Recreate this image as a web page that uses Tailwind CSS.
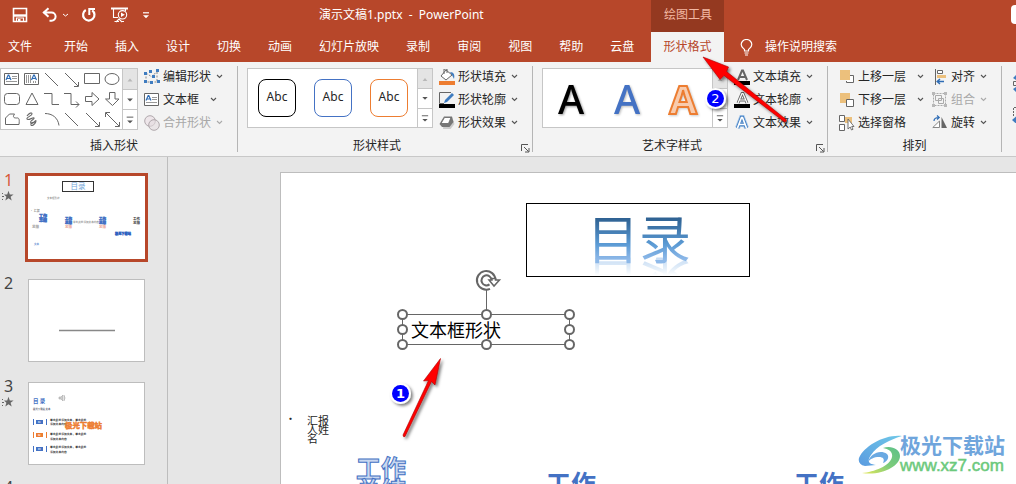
<!DOCTYPE html>
<html lang="zh-CN">
<head>
<meta charset="utf-8">
<title>演示文稿1.pptx - PowerPoint</title>
<script src="https://cdn.jsdelivr.net/npm/@tailwindcss/browser@4"></script>
</head>
<body class="relative flex h-screen flex-col overflow-hidden bg-[#e6e6e6] font-['Noto_Sans','Noto_Sans_CJK_SC',sans-serif] text-xs text-[#262626]">

<svg class="hidden">
  <symbol id="chev" viewBox="0 0 7 5"><path d="M1 1l2.5 2.5L6 1" fill="none" stroke="#555" stroke-width="1.1"/></symbol>
  <symbol id="chevoff" viewBox="0 0 7 5"><path d="M1 1l2.5 2.5L6 1" fill="none" stroke="#aaa" stroke-width="1.1"/></symbol>
  <symbol id="up" viewBox="0 0 14 20"><path d="M4.500 12.500h5L7 9.500z" fill="#b8b8b8"/></symbol>
  <symbol id="down" viewBox="0 0 14 20"><path d="M4 9h6l-3 3z" fill="#555"/></symbol>
  <symbol id="more" viewBox="0 0 14 20"><path d="M3.500 7.500h7" stroke="#555"/><path d="M4 11h6l-3 3z" fill="#555"/></symbol>
  <symbol id="launch" viewBox="0 0 9 9"><path d="M.5 7V.5H7M3 3l4.500 4.500M8 4v4H4" fill="none" stroke="#555"/></symbol>
  <symbol id="star" viewBox="0 0 12 12"><path d="M6.500.8l1.300 3.600 3.800.1-3 2.300 1.100 3.700-3.200-2.200-3.200 2.200 1.100-3.700L2 4.500l3.200-.1z" fill="#666"/><path d="M0 3.500h1M0 6.500h2M0 9.500h1" stroke="#666"/></symbol>
</svg>

<header class="bg-[#b7472a] text-white">
  <div class="flex h-8">
    <div class="flex flex-1 items-center pb-[2px] pl-3">
      <button aria-label="保存" class="mr-[14px]"><svg class="size-4" viewBox="0 0 16 16"><path d="M1.500 1.500h13v13h-13z" fill="none" stroke="#fff" stroke-width="1.600"/><path d="M2 8.500h12" stroke="#fff" stroke-width="2.400"/><path d="M4.500 15v-4h7v4" fill="none" stroke="#fff" stroke-width="1.200"/><path d="M6 12h2.500v3H6z" fill="#fff"/></svg></button>
      <button aria-label="撤消"><svg class="size-4" viewBox="0 0 16 16"><path d="M1 5.500h8.500a4 4 0 010 8.200H7.500M6.500 1.200L1.800 5.500l4.700 4.300" fill="none" stroke="#fff" stroke-width="2"/></svg></button>
      <button aria-label="撤消选项" class="ml-1 mr-3"><svg class="h-[5px] w-[7px]" viewBox="0 0 7 5"><path d="M1 1l2.500 2L6 1" fill="none" stroke="#fff"/></svg></button>
      <button aria-label="重复" class="mr-[14px]"><svg class="size-4" viewBox="0 0 16 16"><path d="M4.800 3A5.700 5.700 0 1 0 11.200 3.300" fill="none" stroke="#fff" stroke-width="2.200"/><path d="M8.300 8V2H14" fill="none" stroke="#fff" stroke-width="2"/></svg></button>
      <button aria-label="从头开始放映" class="mr-[15px]"><svg class="h-4 w-[17px]" viewBox="0 0 17 16"><path d="M0 1.500h17" stroke="#fff" stroke-width="2"/><path d="M2.500 2v8.500H7M14.500 2v2M5 15l3-3 3 3M3.500 14.500H8M11 14.500h2" fill="none" stroke="#fff" stroke-width="1.100"/><circle cx="11.500" cy="7.800" r="4.200" fill="#b7472a" stroke="#fff" stroke-width="1.100"/><path d="M10 5.500v4.600l3.800-2.300z" fill="#fff"/></svg></button>
      <button aria-label="自定义快速访问工具栏"><svg class="h-[7px] w-[6px]" viewBox="0 0 6 7"><path d="M0 .8h6" stroke="#fff" stroke-width="1.200"/><path d="M0 3.200h6l-3 3z" fill="#fff"/></svg></button>
      <h1 class="ml-[170px] whitespace-pre">演示文稿1.pptx  -  PowerPoint</h1>
    </div>
    <div class="flex w-[73px] items-center bg-[#943920] pb-[2px] pl-[13px] text-[#f3b8a3]">绘图工具</div>
    <div class="flex w-[292px] items-center justify-end pb-1"><span class="h-[19px] w-[5px] rounded-l-sm bg-white"></span></div>
  </div>
  <nav class="flex h-[30px] items-center">
    <div class="flex flex-1 items-center gap-[27px] pl-2">
      <a href="#" class="mr-[5px]">文件</a><a href="#">开始</a><a href="#">插入</a><a href="#">设计</a><a href="#">切换</a><a href="#">动画</a><a href="#">幻灯片放映</a><a href="#">录制</a><a href="#">审阅</a><a href="#">视图</a><a href="#">帮助</a><a href="#">云盘</a>
    </div>
    <a href="#" class="flex h-full w-[73px] items-center justify-center bg-[#f3f3f3] text-[#b7472a]">形状格式</a>
    <button class="flex w-[292px] items-center gap-3 pl-4"><svg class="h-[17px] w-[13px]" viewBox="0 0 13 17"><path d="M4.500 12V10.500C3 9 1.200 8 1.200 5.500a5.300 5 0 0110.600 0C11.800 8 10 9 8.500 10.500V12zM4.500 14h4M5 16h3" fill="none" stroke="#fff" stroke-width="1.200"/></svg>操作说明搜索</button>
  </nav>
</header>

<section class="flex h-[95px] shrink-0 border-b border-[#c8c8c8] bg-[#f3f3f3]" aria-label="形状格式">
  <!-- 插入形状 -->
  <div class="my-1 flex w-[238px] shrink-0 flex-col border-r border-[#b5b5b5]">
    <div class="mt-[2px] flex">
      <div class="flex h-[62px] w-[138px] border border-[#c6c6c6] bg-white">
        <div class="grid flex-1 grid-cols-6">
          <button aria-label="文本框"><svg class="size-5" viewBox="0 0 20 20"><path d="M3.500 4.500h14v11h-14z" fill="none" stroke="#666"/><path d="M5 11l2.200-5h.6L10 11M6 9.500h3" fill="none" stroke="#2e6cb5" stroke-width="1.200"/><path d="M11 7.500h5M11 9.500h5M5 12.500h11" stroke="#999"/></svg></button>
          <button aria-label="竖排文本框"><svg class="size-5" viewBox="0 0 20 20"><path d="M3.500 4.500h14v11h-14z" fill="none" stroke="#666"/><path d="M10.500 11l2.200-5h.6l2.200 5M11.500 9.500h3" fill="none" stroke="#2e6cb5" stroke-width="1.200"/><path d="M5.500 6v8M7.500 6v8M9.500 6v8M12.500 12v2M14.500 12v2" stroke="#999"/></svg></button>
          <button aria-label="直线"><svg class="size-5" viewBox="0 0 20 20"><path d="M4 4l13 13" stroke="#666"/></svg></button>
          <button aria-label="箭头"><svg class="size-5" viewBox="0 0 20 20"><path d="M4 4l13 13M17.500 13v4.500H13" fill="none" stroke="#666"/></svg></button>
          <button aria-label="矩形"><svg class="size-5" viewBox="0 0 20 20"><path d="M2.500 4.500h15v10h-15z" fill="none" stroke="#666"/></svg></button>
          <button aria-label="椭圆"><svg class="size-5" viewBox="0 0 20 20"><ellipse cx="10" cy="10" rx="7" ry="5.500" fill="none" stroke="#666"/></svg></button>
          <button aria-label="圆角矩形"><svg class="size-5" viewBox="0 0 20 20"><rect x="3.500" y="4.500" width="15" height="11" rx="3" fill="none" stroke="#666"/></svg></button>
          <button aria-label="三角形"><svg class="size-5" viewBox="0 0 20 20"><path d="M11 4L17 15.500H5z" fill="none" stroke="#666"/></svg></button>
          <button aria-label="肘形连接符"><svg class="size-5" viewBox="0 0 20 20"><path d="M3 4.500h8v11h7" fill="none" stroke="#666"/></svg></button>
          <button aria-label="肘形箭头连接符"><svg class="size-5" viewBox="0 0 20 20"><path d="M3 4.500h7v11h8M15 12.500l3 3-3 3" fill="none" stroke="#666"/></svg></button>
          <button aria-label="右箭头"><svg class="size-5" viewBox="0 0 20 20"><path d="M3.500 7.500H10v-4l7 6.500-7 6.500v-4H3.500z" fill="none" stroke="#666"/></svg></button>
          <button aria-label="下箭头"><svg class="size-5" viewBox="0 0 20 20"><path d="M7.500 3.500v6.500h-4l7 6.500 6.500-6.500h-4V3.500z" fill="none" stroke="#666"/></svg></button>
          <button aria-label="任意多边形"><svg class="size-5" viewBox="0 0 20 20"><path d="M4.500 15.500V9l4-4h5c-2 3-1 4 2 4 3-.5 3 2 2.500 6.500z" fill="none" stroke="#666"/></svg></button>
          <button aria-label="自由曲线"><svg class="size-5" viewBox="0 0 20 20"><path d="M6 7c2-3 5-4 5-2s-6 3-5 5 6-2 7-1-5 3-3 5 5-4 5-2-4 6-5 4 2-3 4-3" fill="none" stroke="#666" stroke-width="1.100"/></svg></button>
          <button aria-label="弧形"><svg class="size-5" viewBox="0 0 20 20"><path d="M4 4.500c7 0 13 4 14 12" fill="none" stroke="#666"/></svg></button>
          <button aria-label="直线"><svg class="size-5" viewBox="0 0 20 20"><path d="M4 4l13 13" stroke="#666"/></svg></button>
          <button aria-label="箭头"><svg class="size-5" viewBox="0 0 20 20"><path d="M4 4l13 13M17.500 13v4.500H13" fill="none" stroke="#666"/></svg></button>
          <button aria-label="双箭头"><svg class="size-5" viewBox="0 0 20 20"><path d="M4 4l13 13M17.500 13v4.500H13M3.500 8V3.500H8" fill="none" stroke="#666"/></svg></button>
        </div>
        <div class="flex w-[15px] flex-col divide-y divide-[#c6c6c6] border-l border-[#c6c6c6]">
          <button aria-label="上一行" class="flex-1 bg-[#e4e4e4]"><svg class="h-5 w-[14px]"><use href="#up"/></svg></button>
          <button aria-label="下一行" class="flex-1"><svg class="h-[19px] w-[14px]"><use href="#down"/></svg></button>
          <button aria-label="其他形状" class="flex-1"><svg class="h-[19px] w-[14px]"><use href="#more"/></svg></button>
        </div>
      </div>
      <div class="-mt-[3px] ml-[6px] flex flex-col">
        <button class="flex h-[23px] items-center gap-[3px]"><svg class="size-4" viewBox="0 0 16 16"><path d="M2 4l6 4 5-6M2 4v9h11V2" fill="none" stroke="#888" stroke-dasharray="2 1.500"/><path d="M0 3h3v3H0zM5 1h3v3H5zM12 0h3v3h-3zM8 6h3v3H8zM0 11h3v3H0zM6 12h3v3H6zM13 11h3v3h-3z" fill="#3f7cc0"/></svg>编辑形状<svg class="ml-[2px] h-[5px] w-[7px]"><use href="#chev"/></svg></button>
        <button class="flex h-[23px] items-center gap-[3px]"><svg class="size-4" viewBox="0 0 16 16"><path d="M.5 1.500h14v12H.5z" fill="#fff" stroke="#666"/><path d="M2 8.500l2.200-5h.6L7 8.500M3 7h3" fill="none" stroke="#2e6cb5" stroke-width="1.200"/><path d="M8 5.500h5M8 7.500h5M2 10.500h11" stroke="#999"/></svg>文本框<svg class="ml-2 h-[5px] w-[7px]"><use href="#chev"/></svg></button>
        <button disabled class="flex h-[23px] items-center gap-[3px] text-[#a8a8a8]"><svg class="size-4" viewBox="0 0 16 16"><circle cx="6" cy="6" r="5.300" fill="#eee6ea" stroke="#b0a8ac"/><circle cx="10" cy="10" r="5.300" fill="#e4dce0" fill-opacity=".6" stroke="#b0a8ac"/></svg>合并形状<svg class="ml-[2px] h-[5px] w-[7px]"><use href="#chevoff"/></svg></button>
      </div>
    </div>
    <div class="mt-[2px] pr-[9px] text-center leading-[20px]">插入形状</div>
  </div>

  <!-- 形状样式 -->
  <div class="my-1 flex w-[295px] shrink-0 flex-col border-r border-[#b5b5b5]">
    <div class="mt-[2px] flex pl-[9px]">
      <div class="flex h-[60px] w-[186px] border border-[#c6c6c6] bg-white">
        <div class="flex flex-1 gap-[18px] pl-[10px] pt-[10px]">
          <button class="size-[38px] rounded-lg border border-black pb-[2px]">Abc</button>
          <button class="size-[38px] rounded-lg border border-[#4472c4] pb-[2px]">Abc</button>
          <button class="size-[38px] rounded-lg border border-[#ed7d31] pb-[2px]">Abc</button>
        </div>
        <div class="flex w-[15px] flex-col divide-y divide-[#c6c6c6] border-l border-[#c6c6c6]">
          <button aria-label="上一行" class="flex-1 bg-[#e4e4e4]"><svg class="h-[19px] w-[14px]"><use href="#up"/></svg></button>
          <button aria-label="下一行" class="flex-1"><svg class="h-[18px] w-[14px]"><use href="#down"/></svg></button>
          <button aria-label="其他样式" class="flex-1"><svg class="h-[18px] w-[14px]"><use href="#more"/></svg></button>
        </div>
      </div>
      <div class="-mt-[3px] ml-[6px] flex flex-col">
        <button class="flex h-[23px] items-center gap-[3px]"><svg class="size-4" viewBox="0 0 16 16"><path d="M7 1l6 5-6 5-5-4z" fill="#fff" stroke="#666"/><path d="M5 5V0h3v4" fill="none" stroke="#666"/><path d="M11 3c4 0 5 3 4 7l-2-4z" fill="#3f7cc0"/><path d="M0 12h16v4H0z" fill="#ed7d31"/></svg>形状填充<svg class="ml-[2px] h-[5px] w-[7px]"><use href="#chev"/></svg></button>
        <button class="flex h-[23px] items-center gap-[3px]"><svg class="size-4" viewBox="0 0 16 16"><path d="M12 .5H.5v11H5" fill="none" stroke="#666"/><path d="M5 11l1-3 7-7 2 2-7 7z" fill="#3f7cc0"/><path d="M0 12h16v4H0z"/></svg>形状轮廓<svg class="ml-[2px] h-[5px] w-[7px]"><use href="#chev"/></svg></button>
        <button class="flex h-[23px] items-center gap-[3px]"><svg class="size-4" viewBox="0 0 16 16"><path d="M5 5h9l1.500 4-4 5H4z" fill="#ccc"/><path d="M5 1.500h8l1.500 5.500-4 5H3L.5 9z" fill="#777"/><path d="M5.500 2.500H12L9.500 8.500H2z" fill="#fff" stroke="#666" stroke-width=".8"/></svg>形状效果<svg class="ml-[2px] h-[5px] w-[7px]"><use href="#chev"/></svg></button>
      </div>
    </div>
    <div class="mt-[2px] grid grid-cols-[1fr_auto_1fr] items-center pr-[2px] leading-[20px]"><span></span><span class="-ml-[14px]">形状样式</span><button aria-label="设置形状格式" class="mt-1 justify-self-end"><svg class="size-[9px]"><use href="#launch"/></svg></button></div>
  </div>

  <!-- 艺术字样式 -->
  <div class="my-1 flex w-[295px] shrink-0 flex-col border-r border-[#b5b5b5]">
    <div class="mt-[2px] flex pl-[9px]">
      <div class="flex h-[60px] w-[186px] border border-[#c6c6c6] bg-white">
        <div class="flex flex-1 pt-[2px] text-[40px] leading-[56px] font-medium">
          <button class="w-14 text-black drop-shadow-[1px_1px_1px_#999]">A</button>
          <button class="w-14 text-[#4472c4] drop-shadow-[1px_1px_1px_#bbb]">A</button>
          <button class="w-14 font-bold text-[#f8cbad] drop-shadow-[1px_1px_1px_#ccc] [-webkit-text-stroke:2px_#ed7d31]">A</button>
        </div>
        <div class="flex w-[15px] flex-col divide-y divide-[#c6c6c6] border-l border-[#c6c6c6]">
          <button aria-label="上一行" class="flex-1 bg-[#e4e4e4]"><svg class="h-[19px] w-[14px]"><use href="#up"/></svg></button>
          <button aria-label="下一行" class="flex-1"><svg class="h-[18px] w-[14px]"><use href="#down"/></svg></button>
          <button aria-label="其他艺术字" class="flex-1"><svg class="h-[18px] w-[14px]"><use href="#more"/></svg></button>
        </div>
      </div>
      <div class="-mt-[3px] ml-[6px] flex flex-col">
        <button class="flex h-[23px] items-center gap-[3px]"><svg class="size-4" viewBox="0 0 16 16"><path d="M4 11L8 1.500h1L13 11M5.500 8h6" fill="none" stroke="#666" stroke-width="2"/><path d="M0 12h16v4H0z"/></svg>文本填充<svg class="ml-[2px] h-[5px] w-[7px]"><use href="#chev"/></svg></button>
        <button class="flex h-[23px] items-center gap-[3px]"><svg class="size-4" viewBox="0 0 16 16"><path d="M4 11L8 1.500h1L13 11M5.500 8h6" fill="none" stroke="#666" stroke-width="3"/><path d="M4 11L8 1.500h1L13 11M5.500 8h6" fill="none" stroke="#fff" stroke-width="1.200"/><path d="M0 12h16v4H0z"/></svg>文本轮廓<svg class="ml-[2px] h-[5px] w-[7px]"><use href="#chev"/></svg></button>
        <button class="flex h-[23px] items-center gap-[3px]"><svg class="size-4" viewBox="0 0 16 16"><path d="M3.500 13L7.500 2.500h1L12.500 13M5 9.500h6" fill="none" stroke="#a9c9ea" stroke-width="5"/><path d="M3.500 13L7.500 2.500h1L12.500 13M5 9.500h6" fill="none" stroke="#3f7cc0" stroke-width="3.400"/><path d="M3.500 13L7.500 2.500h1L12.500 13M5 9.500h6" fill="none" stroke="#fff" stroke-width="1.700"/></svg>文本效果<svg class="ml-[2px] h-[5px] w-[7px]"><use href="#chev"/></svg></button>
      </div>
    </div>
    <div class="mt-[2px] grid grid-cols-[1fr_auto_1fr] items-center pr-[2px] leading-[20px]"><span></span><span class="-ml-[14px]">艺术字样式</span><button aria-label="设置文本效果格式" class="mt-1 justify-self-end"><svg class="size-[9px]"><use href="#launch"/></svg></button></div>
  </div>

  <!-- 排列 -->
  <div class="my-1 flex w-[174px] shrink-0 flex-col border-r border-[#b5b5b5]">
    <div class="-mt-[1px] flex gap-2 pl-[11px]">
      <div class="flex flex-col">
        <button class="flex h-[23px] items-center gap-[3px]"><svg class="size-4" viewBox="0 0 16 16"><path d="M8 6.500h6.500v7H7.500V12" fill="#fff" stroke="#666"/><path d="M1 1h10v10H1z" fill="#ecc07c"/></svg>上移一层<svg class="ml-2 h-[5px] w-[7px]"><use href="#chev"/></svg></button>
        <button class="flex h-[23px] items-center gap-[3px]"><svg class="size-4" viewBox="0 0 16 16"><path d="M1 1h10v10H1z" fill="#ecc07c"/><path d="M7.500 7.500h7v7h-7z" fill="#fff" stroke="#666"/></svg>下移一层<svg class="ml-2 h-[5px] w-[7px]"><use href="#chev"/></svg></button>
        <button class="flex h-[23px] items-center gap-[3px]"><svg class="size-4" viewBox="0 0 16 16"><path d="M6 2h7v6H6z" fill="#ecc07c"/><path d="M.5.5h5v6h-5zM.5 9.500h5v6h-5z" fill="#fff" stroke="#666"/><path d="M9 4v10l2.200-2 1.300 3 1.500-.7-1.300-2.800H15z" fill="#fff" stroke="#666" stroke-width=".9"/></svg>选择窗格</button>
      </div>
      <div class="flex flex-col">
        <button class="flex h-[23px] items-center gap-[3px]"><svg class="size-4" viewBox="0 0 16 16"><path d="M3.500 0v16" stroke="#666"/><path d="M5.500 1.500h5v3h-5z" fill="#fff" stroke="#666"/><path d="M5 6h9v3H5z" fill="#ecc07c"/><path d="M12 12.500H5.500M8 10l-2.800 2.500L8 15" fill="none" stroke="#2e6cb5" stroke-width="1.500"/></svg>对齐<svg class="ml-[2px] h-[5px] w-[7px]"><use href="#chev"/></svg></button>
        <button disabled class="flex h-[23px] items-center gap-[3px] text-[#a8a8a8]"><svg class="size-4" viewBox="0 0 16 16"><path d="M1.500 1.500h12v12h-12z" fill="none" stroke="#aaa" stroke-dasharray="2 1"/><path d="M3.500 3.500h6v5h-6zM6.500 6.500h5v5h-5z" fill="none" stroke="#aaa"/><path d="M0 0h3v3H0zM12 0h3v3h-3zM0 12h3v3H0zM12 12h3v3h-3z" fill="#b8b8b8"/></svg>组合<svg class="ml-[2px] h-[5px] w-[7px]"><use href="#chevoff"/></svg></button>
        <button class="flex h-[23px] items-center gap-[3px]"><svg class="size-4" viewBox="0 0 16 16"><path d="M.8 12.500h6.700V6z" fill="#fff" stroke="#888"/><path d="M9.500 2v11H15z" fill="#666"/><path d="M2 6c0-3 2-3.500 5-3.500M5 .5l2.200 2L5 4.500" fill="none" stroke="#2e6cb5" stroke-width="1.200"/></svg>旋转<svg class="ml-[2px] h-[5px] w-[7px]"><use href="#chev"/></svg></button>
      </div>
    </div>
    <div class="mt-[2px] text-center leading-[20px]">排列</div>
  </div>

  <!-- 大小 -->
  <div class="flex flex-1 flex-col items-end gap-[14px] overflow-hidden pt-[13px]">
    <svg class="h-[17px] w-[4px]" viewBox="0 0 4 17"><path d="M1.500 6.500H5M1.500 10.500H5M1.500 6.500v4" fill="none" stroke="#666"/><path d="M4 0v5L1 3zM4 17v-5L1 14z" fill="#3f7cc0"/></svg>
    <svg class="h-[17px] w-[4px]" viewBox="0 0 4 17"><path d="M1.500 10V1.500H5" fill="none" stroke="#666" stroke-dasharray="2 1"/><path d="M0 14l4-3.500v7z" fill="#3f7cc0"/></svg>
  </div>
</section>

<div class="flex min-h-0 flex-1 overflow-hidden">
  <!-- 幻灯片缩略图 -->
  <aside class="flex w-[168px] shrink-0 flex-col gap-[17px] border-r border-[#bdbdbd] pt-4" aria-label="幻灯片">
    <button class="flex items-start text-left">
      <span class="flex w-[25px] flex-col pl-1 text-base leading-[15px] text-[#d8583a]">1<svg class="mt-[2px] -ml-[2px] size-3"><use href="#star"/></svg></span>
      <svg class="h-[89px] w-[123px] border-[3px] border-[#b7472a] bg-white" viewBox="0 0 117 83" font-family="Noto Sans CJK SC" font-weight="700">
        <rect x="34.500" y="5.500" width="31" height="10" fill="#fff" stroke="#333"/><text x="42.500" y="13.200" font-size="7.500" fill="#6fa5d8" font-weight="400">目录</text>
        <text x="19" y="23" font-size="2.500" fill="#777" font-weight="400">文本框形状</text>
        <text x="2" y="36" font-size="3" fill="#555" font-weight="400">• 汇报</text>
        <g fill="#4472c4" stroke="#4472c4" stroke-width=".5"><text x="11" y="42" font-size="4">工作</text><text x="11" y="46" font-size="4">总结</text><text x="37" y="44" font-size="3.500">工作</text><text x="37" y="47.600" font-size="3.500">总结</text><text x="71" y="44" font-size="3.500">工作</text><text x="71" y="47.600" font-size="3.500">总结</text></g>
        <g fill="#333"><text x="105" y="44" font-size="3.500">工作</text><text x="105" y="47.600" font-size="3.500">总结</text></g>
        <text x="45" y="46.500" font-size="2.600" fill="#999">单击此处添加文本内容</text>
        <g fill="#e8a090" font-size="3.500"><text x="37" y="52">总结</text><text x="71" y="52">总结</text></g>
        <text x="4" y="52" font-size="3.500" fill="#999">总结</text>
        <text x="87" y="59" font-size="3.200" fill="#2f62c0" stroke="#2f62c0" stroke-width=".4">极光下载站</text>
        <text x="6" y="69" font-size="2.500" fill="#6b93d4">文本</text>
      </svg>
    </button>
    <button class="flex items-start text-left">
      <span class="w-7 pl-1 text-base leading-[8px] text-[#444]">2</span>
      <svg class="h-[83px] w-[117px] border border-[#bdbdbd] bg-white" viewBox="0 0 115 81"><path d="M30 50.500h56" stroke="#888" stroke-width="1.500"/></svg>
    </button>
    <button class="mt-[3px] flex items-start text-left">
      <span class="flex w-7 flex-col pl-1 text-base leading-[8px] text-[#444]">3<svg class="mt-[6px] -ml-[2px] size-3"><use href="#star"/></svg></span>
      <svg class="h-[83px] w-[117px] border border-[#bdbdbd] bg-white" viewBox="0 0 115 81" font-family="Noto Sans CJK SC" font-weight="700">
        <text x="4" y="20" font-size="5.500" fill="#4472c4">目 录</text>
        <path d="M30 14h2l2-2v6l-2-2h-2zM35 12q2 3 0 6" fill="#ccc" stroke="#aaa" stroke-width=".6"/>
        <text x="4" y="27" font-size="2.400" fill="#667">极光下载站 文本</text>
        <g stroke-width="1"><path d="M4.500 36v6M17.500 36v6M4.500 63v6M17.500 63v6" stroke="#4472c4"/><path d="M4.500 49v6M17.500 49v6" stroke="#ed7d31"/></g>
        <path d="M7 37h7v4H7zM7 64h7v4H7z" fill="#4472c4"/><path d="M7 50h7v4H7z" fill="#ed7d31"/>
        <g font-size="2.200" fill="#fff"><text x="9" y="40">01</text><text x="9" y="53">02</text><text x="9" y="67">03</text></g>
        <g font-size="2.800" fill="#333"><text x="21" y="38">单击此处添加文本，单击此处</text><text x="21" y="42">添加文本内容</text><text x="21" y="52">单击此处添加文本，单击此处</text><text x="21" y="56.500">添加文本内容</text><text x="21" y="65">单击此处添加文本，单击此处</text><text x="21" y="69.500">添加文本内容</text></g>
        <text x="36" y="44.500" font-size="7.400" fill="#ed7d31" stroke="#ed7d31" stroke-width=".5">极光下载站</text>
      </svg>
    </button>
    <button class="pl-1 text-left text-base leading-[10px] text-[#444]">4</button>
  </aside>

  <!-- 幻灯片编辑区 -->
  <main class="flex min-w-0 flex-1 pl-[112px] pt-[15px]">
    <div class="relative flex-1 border-l border-t border-[#bdbdbd] bg-white">
      <div class="absolute top-[30px] left-[245px] flex h-[74px] w-[224px] items-start justify-center border border-black">
        <span class="-mt-1 bg-linear-to-b from-[#2f6293] from-25% via-[#5b9bd5] via-60% to-[#8db8e8] to-80% bg-clip-text pl-[2px] font-['Noto_Sans_CJK_SC'] text-[52px] leading-[74px] text-transparent [-webkit-box-reflect:below_-27px_linear-gradient(transparent_62%,rgba(0,0,0,0.5)_85%)]">目录</span>
      </div>

      <div class="absolute top-[141px] left-[121px] flex h-[31px] w-[168px] items-center border border-[#666] pb-[2px] pl-2 font-['Noto_Sans_CJK_SC'] text-lg text-black">文本框形状</div>
      <svg class="absolute top-[95px] left-[114px] h-[84px] w-[182px]" viewBox="0 0 182 84" fill="none" stroke="#666">
        <path d="M91.500 22v20"/>
        <path d="M100.500 12a9.300 9.300 0 1 0-5.500 8.800" stroke-width="2"/><path d="M96.500 12a5 5 0 1 0-2 4.400" stroke-width="2"/><path d="M94 12h3v-1.500h3.500V12h4L99 18z" fill="#fff" stroke-width="1.500"/>
        <g fill="#fff" stroke-width="2"><circle cx="7.500" cy="46.500" r="4.500"/><circle cx="91.500" cy="46.500" r="4.500"/><circle cx="174.500" cy="46.500" r="4.500"/><circle cx="7.500" cy="61.500" r="4.500"/><circle cx="174.500" cy="61.500" r="4.500"/><circle cx="7.500" cy="76.500" r="4.500"/><circle cx="91.500" cy="76.500" r="4.500"/><circle cx="174.500" cy="76.500" r="4.500"/></g>
      </svg>

      <div class="absolute top-[241px] left-[4px] flex gap-[11px] font-['Noto_Sans_CJK_SC'] text-[11px] leading-[9px]"><span>•</span><p class="w-[22px] pt-[2px]">汇报人姓名</p></div>

      <p class="absolute top-[283px] left-[75px] w-[50px] font-['Noto_Sans_CJK_SC'] text-[25px] leading-[22px] font-bold text-[#c9d8f0] [-webkit-text-stroke:1px_#4472c4]">工作总结</p>
      <p class="absolute top-[297px] left-[265px] w-[50px] font-['Noto_Sans_CJK_SC'] text-[25px] leading-[24px] font-bold text-[#4472c4]">工作总结</p>
      <p class="absolute top-[297px] left-[513px] w-[50px] font-['Noto_Sans_CJK_SC'] text-[25px] leading-[24px] font-bold text-[#4472c4]">工作总结</p>

      <!-- 站点标识 -->
      <div class="absolute right-[11px] bottom-[7px] flex items-center">
        <svg class="-mr-2 h-10 w-[50px]" viewBox="0 0 50 40">
          <defs><linearGradient id="lg1" x1="0" y1="1" x2="1" y2="0"><stop offset="0" stop-color="#5a9be0"/><stop offset="1" stop-color="#6fc8e8"/></linearGradient><linearGradient id="lg2" x1="0" y1="1" x2="1" y2="0"><stop offset="0" stop-color="#e6e85a"/><stop offset=".5" stop-color="#7dcc7a"/><stop offset="1" stop-color="#5cc08a"/></linearGradient></defs>
          <path d="M44 1C27-1 6 11 1 23c-1 4 1 7 6 8l11-1C10 29 9 26 13 20 19 11 31 5 44 1z" fill="url(#lg1)"/>
          <path d="M10 27c2-8 12-13 19-8 3 3 0 8-4 9 2-4 0-6-4-6-5 0-9 2-11 5z" fill="#6aa9e2"/>
          <path d="M25 13c8-3 17 1 17 8 0 10-18 20-38 17 12-1 28-7 30-16 1-5-3-8-9-9z" fill="url(#lg2)"/>
        </svg>
        <div class="flex flex-col"><span class="font-['Noto_Sans_CJK_SC'] text-[21px] leading-[22px] font-bold text-[#6fa5dc]">极光下载站</span><span class="font-['Liberation_Sans'] text-[17px] leading-[22px] text-[#6cc97c] [-webkit-text-stroke:0.5px_#6cc97c]">www.xz7.com</span></div>
      </div>
    </div>
  </main>
</div>

<!-- 步骤标注 -->
<svg class="pointer-events-none absolute top-0 left-0 h-[484px] w-[1016px]" viewBox="0 0 1016 484" font-family="DejaVu Sans" font-weight="700" font-size="13" text-anchor="middle">
  <defs><filter id="sh" x="-30%" y="-30%" width="160%" height="160%"><feDropShadow dx="2" dy="2" stdDeviation="1.500" flood-opacity=".5"/></filter></defs>
  <g filter="url(#sh)">
    <path d="M440.500 358.500L435 385l-3.500-3.500L405 436.500q-2 1-2-1.500l25.500-54.500-5 .5z" fill="#f00" stroke="#a00" stroke-width=".6"/>
    <path d="M703 57l25.500 10-2 4.500L786 119.500q1 2-1.500 2.500L724 75.500l-4 4z" fill="#f00" stroke="#a00" stroke-width=".6"/>
    <circle cx="400.500" cy="393.500" r="10.500" fill="#fff"/><circle cx="715.500" cy="98.500" r="10.500" fill="#fff"/>
  </g>
  <circle cx="400.500" cy="393.500" r="8.500" fill="#00f"/><text x="400.500" y="398" fill="#fff">1</text>
  <circle cx="715.500" cy="98.500" r="8.500" fill="#00f"/><text x="715.500" y="103" fill="#fff" font-weight="400">2</text>
</svg>
</body>
</html>
